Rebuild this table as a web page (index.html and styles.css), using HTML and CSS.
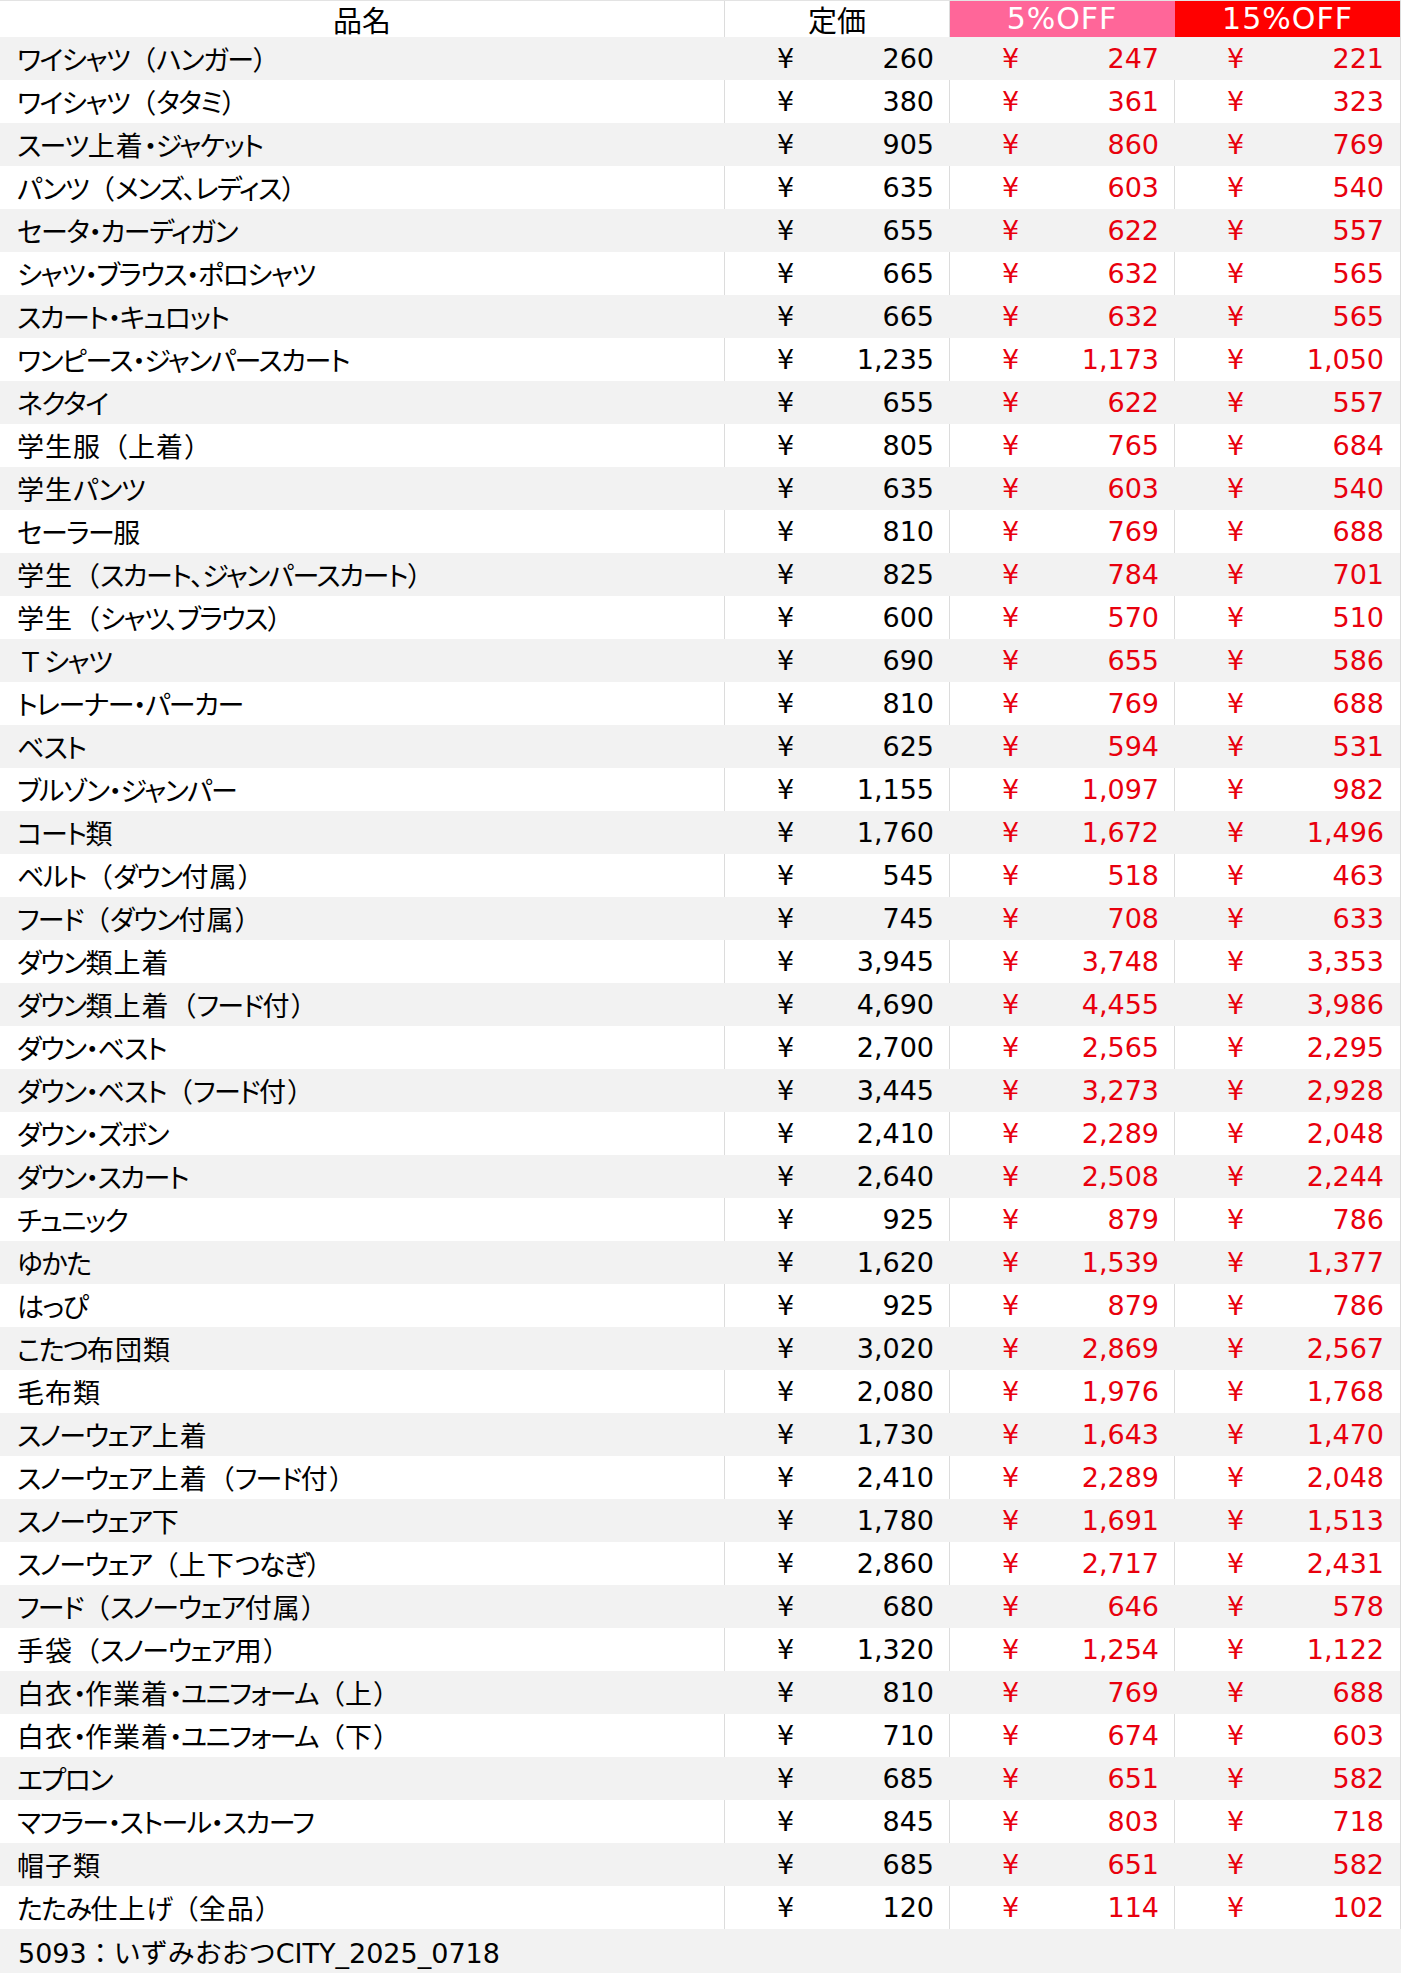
FILE: index.html
```html
<!DOCTYPE html>
<html lang="ja">
<head>
<meta charset="utf-8">
<title>料金表</title>
<link rel="stylesheet" href="styles.css">
</head>
<body>
<div class="sheet">
  <div class="row head">
    <div class="cell hname">品名</div>
    <div class="cell hc">定価</div>
    <div class="cell hc off off5">5%OFF</div>
    <div class="cell hc off off15">15%OFF</div>
  </div>
  <div id="rows"></div>
  <div class="foot">5093：いずみおおつCITY_2025_0718</div>
</div>
<script src="app.js"></script>
</body>
</html>
```
FILE: app.js
```js
const data = [
["ワイシャツ（ハンガー）","260","247","221"],
["ワイシャツ（タタミ）","380","361","323"],
["スーツ上着・ジャケット","905","860","769"],
["パンツ（メンズ、レディス）","635","603","540"],
["セータ・カーディガン","655","622","557"],
["シャツ・ブラウス・ポロシャツ","665","632","565"],
["スカート・キュロット","665","632","565"],
["ワンピース・ジャンパースカート","1,235","1,173","1,050"],
["ネクタイ","655","622","557"],
["学生服（上着）","805","765","684"],
["学生パンツ","635","603","540"],
["セーラー服","810","769","688"],
["学生（スカート、ジャンパースカート）","825","784","701"],
["学生（シャツ、ブラウス）","600","570","510"],
["Ｔシャツ","690","655","586"],
["トレーナー・パーカー","810","769","688"],
["ベスト","625","594","531"],
["ブルゾン・ジャンパー","1,155","1,097","982"],
["コート類","1,760","1,672","1,496"],
["ベルト（ダウン付属）","545","518","463"],
["フード（ダウン付属）","745","708","633"],
["ダウン類上着","3,945","3,748","3,353"],
["ダウン類上着（フード付）","4,690","4,455","3,986"],
["ダウン・ベスト","2,700","2,565","2,295"],
["ダウン・ベスト（フード付）","3,445","3,273","2,928"],
["ダウン・ズボン","2,410","2,289","2,048"],
["ダウン・スカート","2,640","2,508","2,244"],
["チュニック","925","879","786"],
["ゆかた","1,620","1,539","1,377"],
["はっぴ","925","879","786"],
["こたつ布団類","3,020","2,869","2,567"],
["毛布類","2,080","1,976","1,768"],
["スノーウェア上着","1,730","1,643","1,470"],
["スノーウェア上着（フード付）","2,410","2,289","2,048"],
["スノーウェア下","1,780","1,691","1,513"],
["スノーウェア（上下つなぎ）","2,860","2,717","2,431"],
["フード（スノーウェア付属）","680","646","578"],
["手袋（スノーウェア用）","1,320","1,254","1,122"],
["白衣・作業着・ユニフォーム（上）","810","769","688"],
["白衣・作業着・ユニフォーム（下）","710","674","603"],
["エプロン","685","651","582"],
["マフラー・ストール・スカーフ","845","803","718"],
["帽子類","685","651","582"],
["たたみ仕上げ（全品）","120","114","102"]
];
function nameHtml(s) {
  let out = "";
  for (const ch of s) {
    if (/[\u4E00-\u9FFF]/.test(ch)) out += `<span class="k">${ch}</span>`;
    else if (ch === "（" || ch === "）" || ch === "Ｔ") out += `<span class="p">${ch}</span>`;
    else out += ch;
  }
  return out;
}
const host = document.getElementById("rows");
const money = (v, cls) => `<div class="cell money ${cls}"><span class="yen">¥</span><span class="num">${v}</span></div>`;
host.innerHTML = data.map((r, i) =>
  `<div class="row ${i % 2 === 0 ? "gray" : "white"}">` +
  `<div class="cell item">${nameHtml(r[0])}</div>` +
  money(r[1], "") + money(r[2], "red") + money(r[3], "red") +
  `</div>`).join("");
```
FILE: styles.css
```css
html, body {
  margin: 0;
  padding: 0;
  background: #ffffff;
}
body {
  font-family: "DejaVu Sans", "Noto Sans CJK JP", sans-serif;
  font-size: 27px;
  color: #000;
}
.sheet {
  width: 1401px;
}
.row {
  display: grid;
  grid-template-columns: 725px 225px 225px 226px;
  height: 43px;
  box-sizing: border-box;
}
.cell {
  display: flex;
  align-items: center;
  box-sizing: border-box;
  height: 100%;
  white-space: nowrap;
}
.head {
  height: 37px;
  border-top: 1px solid #e3e3e3;
  background: #fff;
}
.head .cell {
  border-right: 1px solid #dcdcdc;
  line-height: 1;
  justify-content: center;
}
.hname, .hc {
  font-family: "Noto Sans CJK JP", sans-serif;
  font-size: 29px;
}
.head .off {
  color: #fff;
  font-family: "DejaVu Sans", sans-serif;
  font-size: 30px;
  letter-spacing: 1px;
}
.head .off5 {
  background: #ff6699;
  border-right-color: #ff6699;
}
.head .off15 {
  background: #ff0000;
  border-right-color: #dcdcdc;
}
.gray {
  background: #f2f2f2;
}
.white {
  background: #ffffff;
}
.white .cell {
  border-right: 1px solid #dcdcdc;
}
.gray .cell {
  border-right: 1px solid #f2f2f2;
}
.gray .cell:last-child {
  border-right-color: #dcdcdc;
}
.item {
  padding-left: 17px;
  font-family: "Noto Sans CJK JP", sans-serif;
  font-feature-settings: "palt";
  font-size: 27px;
  letter-spacing: -1.5px;
}
.item .k {
  letter-spacing: 1px;
}
.item .p {
  letter-spacing: 0;
  font-feature-settings: normal;
}
.money {
  justify-content: space-between;
  padding-left: 52px;
  padding-right: 15px;
}
.money:last-child {
  padding-right: 16px;
}
.red {
  color: #e8000d;
}
.foot {
  height: 44px;
  background: #f2f2f2;
  display: flex;
  align-items: center;
  padding-left: 18px;
}
```
